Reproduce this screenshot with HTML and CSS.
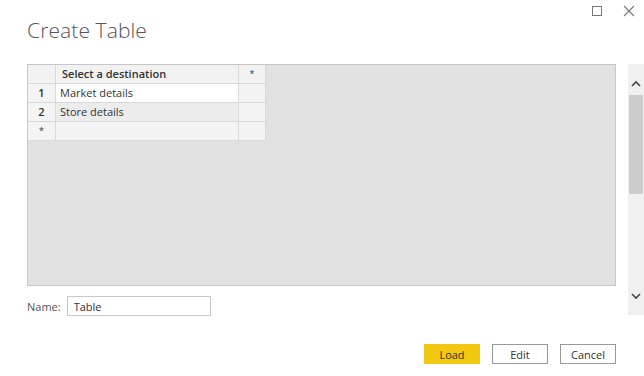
FILE: index.html
```html
<!DOCTYPE html>
<html lang="en">
<head>
    <meta charset="UTF-8">
    <meta name="viewport" content="width=device-width, initial-scale=1.0">
    <title>Create Table</title>
    <link rel="stylesheet" href="styles.css">
</head>
<body>

    <div class="dialog">
        <div class="header">
            <h1 class="title">Create Table</h1>
            <div class="window-controls">
                <svg class="ctrl" width="12" height="12" viewBox="0 0 12 12">
                    <rect x="1.5" y="1.5" width="9" height="9" fill="none" stroke="#777" stroke-width="1"/>
                </svg>
                <svg class="ctrl" width="12" height="12" viewBox="0 0 12 12">
                    <path d="M1 1 L11 11 M11 1 L1 11" stroke="#777" stroke-width="1.1"/>
                </svg>
            </div>
        </div>

        <div class="body">
            <div class="left">
                <div class="grid-area">
                    <table class="grid">
                        <tr class="head">
                            <td class="num"></td>
                            <td class="name">Select a destination</td>
                            <td class="star">*</td>
                        </tr>
                        <tr class="row-white">
                            <td class="num">1</td>
                            <td class="name">Market details</td>
                            <td class="star"></td>
                        </tr>
                        <tr class="row-grey">
                            <td class="num">2</td>
                            <td class="name">Store details</td>
                            <td class="star"></td>
                        </tr>
                        <tr class="row-new">
                            <td class="num">*</td>
                            <td class="name"></td>
                            <td class="star"></td>
                        </tr>
                    </table>
                </div>
                <div class="name-row">
                    <label for="table-name">Name:</label>
                    <input type="text" id="table-name" class="name-input" value="Table">
                </div>
            </div>

            <div class="scrollbar">
                <svg width="16" height="12" viewBox="0 0 16 12">
                    <path d="M4 8 L8 4 L12 8" fill="none" stroke="#444" stroke-width="1.6"/>
                </svg>
                <div class="thumb"></div>
                <div class="track"></div>
                <svg width="16" height="12" viewBox="0 0 16 12">
                    <path d="M4 4 L8 8 L12 4" fill="none" stroke="#444" stroke-width="1.6"/>
                </svg>
            </div>
        </div>

        <div class="footer">
            <button class="btn btn-primary">Load</button>
            <button class="btn">Edit</button>
            <button class="btn">Cancel</button>
        </div>
    </div>

</body>
</html>
```

FILE: styles.css
```css
/* Global Styles */
body {
    margin: 0;
    font-family: "Open Sans", "Noto Sans", sans-serif;
    font-size: 11px;
    color: #333;
    background-color: #fff;
}

.dialog {
    width: 644px;
    height: 376px;
    display: flex;
    flex-direction: column;
}

/* Header */
.header {
    display: flex;
    justify-content: space-between;
    align-items: flex-start;
    height: 64px;
}

.title {
    margin: 16px 0 0 27px;
    font-size: 21px;
    font-weight: 300;
    color: #555;
    letter-spacing: 0.1px;
}

.window-controls {
    display: flex;
    gap: 20px;
    margin: 5px 9px 0 0;
}

.ctrl {
    display: block;
}

/* Body */
.body {
    display: flex;
    align-items: flex-start;
    padding-left: 27px;
}

.left {
    width: 589px;
}

.grid-area {
    height: 220px;
    background-color: #e1e1e1;
    border: 1px solid #c6c6c6;
}

.grid {
    border-collapse: collapse;
    background-color: #fff;
}

.grid td {
    height: 18px;
    padding: 0 4px;
    border: 1px solid #d9d9d9;
    line-height: 18px;
    white-space: nowrap;
}

.grid tr:first-child td {
    border-top: none;
}

.grid td:first-child {
    border-left: none;
}

.grid .num {
    width: 19px;
    text-align: center;
    font-weight: 600;
    background-color: #f4f4f4;
}

.grid .name {
    width: 172px;
}

.grid .star {
    width: 18px;
    text-align: center;
    background-color: #f4f4f4;
}

.grid .head td {
    background-color: #f2f2f2;
    font-weight: 600;
}

.grid .head .name {
    padding-left: 6px;
}

.row-grey td.name {
    background-color: #ececec;
}

.row-new td {
    background-color: #f4f4f4;
}

.row-new .num,
.grid .head .star {
    font-weight: 400;
    font-size: 9px;
}

/* Name field */
.name-row {
    display: flex;
    align-items: center;
    gap: 6px;
    margin-top: 10px;
}

.name-row label {
    color: #555;
}

.name-input {
    width: 144px;
    height: 20px;
    box-sizing: border-box;
    border: 1px solid #c8c8c8;
    padding: 0 6px;
    font-family: inherit;
    font-size: 11px;
    color: #333;
}

/* Scrollbar */
.scrollbar {
    width: 16px;
    height: 251px;
    margin-left: 12px;
    background-color: #f0f0f0;
    display: flex;
    flex-direction: column;
    align-items: center;
}

.scrollbar svg {
    display: block;
    margin-top: 14px;
}

.thumb {
    width: 14px;
    height: 99px;
    margin-top: 5px;
    background-color: #cdcdcd;
}

.track {
    flex-grow: 1;
}

.scrollbar svg:last-child {
    margin: 0 0 13px 0;
}

/* Footer */
.footer {
    display: flex;
    justify-content: flex-end;
    gap: 12px;
    padding: 28px 28px 0 0;
}

.btn {
    width: 56px;
    height: 20px;
    background-color: #fff;
    border: 1px solid #999;
    font-family: inherit;
    font-size: 11px;
    color: #333;
    padding: 0;
}

.btn-primary {
    background-color: #f2c811;
    border-color: #f2c811;
}
```
